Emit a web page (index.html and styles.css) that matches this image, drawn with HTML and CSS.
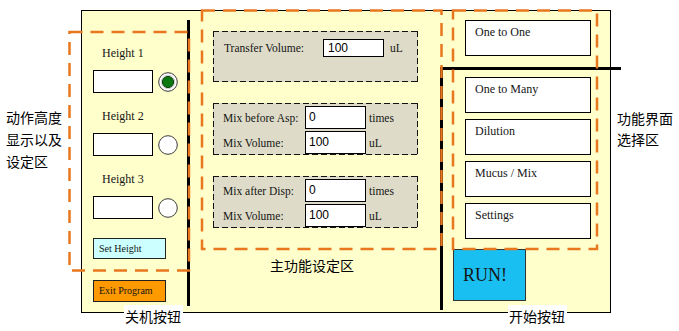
FILE: index.html
```html
<!DOCTYPE html>
<html>
<head>
<meta charset="utf-8">
<link rel="stylesheet" href="styles.css">
</head>
<body>
<div class="stage">
  <div class="panel">
    <div class="left-col">
      <div class="hgroup">
        <div class="hlabel">Height 1</div>
        <div class="hrow">
          <div class="hfield"></div>
          <svg class="radio" viewBox="0 0 20 20"><circle cx="10" cy="10" r="9.3" fill="#fff" stroke="#3a3a3a" stroke-width="1"/><circle cx="10" cy="10" r="6.8" fill="none" stroke="#cfcfcf" stroke-width="1"/><circle cx="10" cy="10" r="5.6" fill="#08780f" stroke="#0a3d0a" stroke-width="1"/></svg>
        </div>
      </div>
      <div class="hgroup">
        <div class="hlabel">Height 2</div>
        <div class="hrow">
          <div class="hfield"></div>
          <svg class="radio" viewBox="0 0 20 20"><circle cx="10" cy="10" r="9.3" fill="#fff" stroke="#3a3a3a" stroke-width="1"/></svg>
        </div>
      </div>
      <div class="hgroup">
        <div class="hlabel">Height 3</div>
        <div class="hrow">
          <div class="hfield"></div>
          <svg class="radio" viewBox="0 0 20 20"><circle cx="10" cy="10" r="9.3" fill="#fff" stroke="#3a3a3a" stroke-width="1"/></svg>
        </div>
      </div>
      <div class="btn btn-set">Set Height</div>
      <div class="btn btn-exit">Exit Program</div>
    </div>
    <div class="divider"></div>
    <div class="mid-col">
      <div class="gbox gbox-single">
        <div class="frow">
          <span class="flabel flabel-wide">Transfer Volume:</span>
          <div class="field field-short">100</div>
          <span class="unit unit-wide">uL</span>
        </div>
      </div>
      <div class="gbox">
        <div class="frow">
          <span class="flabel">Mix before Asp:</span>
          <div class="field">0</div>
          <span class="unit">times</span>
        </div>
        <div class="frow">
          <span class="flabel">Mix Volume:</span>
          <div class="field">100</div>
          <span class="unit">uL</span>
        </div>
      </div>
      <div class="gbox">
        <div class="frow">
          <span class="flabel">Mix after Disp:</span>
          <div class="field">0</div>
          <span class="unit">times</span>
        </div>
        <div class="frow">
          <span class="flabel">Mix Volume:</span>
          <div class="field">100</div>
          <span class="unit">uL</span>
        </div>
      </div>
    </div>
    <div class="right-col">
      <div class="mode mode-first">One to One</div>
      <div class="mode">One to Many</div>
      <div class="mode">Dilution</div>
      <div class="mode">Mucus / Mix</div>
      <div class="mode">Settings</div>
      <div class="run">RUN!</div>
    </div>
  </div>

  <svg class="annot" width="679" height="331" viewBox="0 0 679 331">
    <path d="M441.5 310 V68.5 H621" fill="none" stroke="#000" stroke-width="3"/>
    <g fill="none" stroke="#e8771e" stroke-width="2.5" stroke-dasharray="13 8">
      <rect x="69.5" y="32" width="119.5" height="238.5"/>
      <rect x="202" y="10.5" width="239.5" height="238.5"/>
      <rect x="453" y="10.5" width="144" height="238.5"/>
    </g>
  </svg>

  <div class="note note-left">动作高度<br>显示以及<br>设定区</div>
  <div class="note note-off">关机按钮</div>
  <div class="note note-main">主功能设定区</div>
  <div class="note note-run">开始按钮</div>
  <div class="note note-mode">功能界面<br>选择区</div>
</div>
</body>
</html>
```
FILE: styles.css
```css
body {
  margin: 0;
  background: #fff;
}

.stage {
  position: relative;
  width: 679px;
  height: 331px;
  box-sizing: border-box;
  padding: 10px 0 0 81px;
  overflow: hidden;
  font-family: "Liberation Serif", serif;
  color: #151515;
}

.panel {
  width: 530px;
  height: 303px;
  box-sizing: border-box;
  border: 1px solid #000;
  background: #ffffcc;
  display: flex;
}

/* left column */
.left-col {
  width: 105px;
  box-sizing: border-box;
  padding: 35px 0 0 11px;
  display: flex;
  flex-direction: column;
  align-items: flex-start;
}

.hgroup + .hgroup {
  margin-top: 16px;
}

.hlabel {
  font-size: 12px;
  line-height: 14px;
  margin: 0 0 10px 9px;
}

.hrow {
  display: flex;
  align-items: center;
  gap: 5px;
}

.hfield {
  width: 60px;
  height: 23px;
  box-sizing: border-box;
  border: 1px solid #000;
  background: #fff;
}

.radio {
  width: 20px;
  height: 20px;
  display: block;
}

.btn {
  width: 73px;
  height: 21px;
  box-sizing: border-box;
  border: 1px solid #222;
  font-size: 10px;
  line-height: 19px;
  padding-left: 5px;
  white-space: nowrap;
}

.btn-set {
  margin-top: 19px;
  background: #ccffff;
}

.btn-exit {
  margin-top: 21px;
  height: 22px;
  line-height: 20px;
  background: #ff9900;
}

.divider {
  width: 3px;
  background: #000;
  margin: 9px 0 6px;
}

/* middle column */
.mid-col {
  width: 251px;
  box-sizing: border-box;
  padding: 20px 0 0 23px;
}

.gbox {
  width: 205px;
  height: 52px;
  box-sizing: border-box;
  padding: 3px 0 0 10px;
  background:
    repeating-linear-gradient(90deg, #111 0 6px, transparent 6px 9px) left top / 100% 1px no-repeat,
    repeating-linear-gradient(90deg, #111 0 6px, transparent 6px 9px) left bottom / 100% 1px no-repeat,
    repeating-linear-gradient(180deg, #111 0 6px, transparent 6px 9px) left top / 1px 100% no-repeat,
    repeating-linear-gradient(180deg, #111 0 6px, transparent 6px 9px) right top / 1px 100% no-repeat,
    #dedcc8;
}

.gbox-single {
  height: 51px;
  padding: 8px 0 0 11px;
}

.gbox + .gbox {
  margin-top: 21px;
}

.frow {
  display: flex;
  align-items: center;
}

.frow + .frow {
  margin-top: 2px;
}

.flabel {
  width: 82px;
  font-size: 11.5px;
  white-space: nowrap;
}

.flabel-wide {
  width: 99px;
}

.field {
  width: 61px;
  height: 23px;
  box-sizing: border-box;
  border: 1px solid #000;
  background: #fff;
  font-family: "Liberation Sans", sans-serif;
  font-size: 12px;
  line-height: 21px;
  padding-left: 3px;
  color: #000;
}

.field-short {
  height: 18px;
  line-height: 16px;
  padding-left: 4px;
}

.unit {
  font-size: 11.5px;
  margin-left: 3px;
}

.unit-wide {
  margin-left: 6px;
}

/* right column */
.right-col {
  flex: 1;
  box-sizing: border-box;
  padding: 9px 0 0 12px;
  display: flex;
  flex-direction: column;
  align-items: flex-start;
}

.mode {
  width: 126px;
  height: 36px;
  box-sizing: border-box;
  margin-left: 12px;
  border: 1px solid #000;
  background: #fff;
  font-size: 12px;
  line-height: 14px;
  padding: 4px 0 0 9px;
}

.mode + .mode {
  margin-top: 6px;
}

.mode-first {
  margin-bottom: 15px;
}

.run {
  margin-top: 10px;
  width: 73px;
  height: 52px;
  box-sizing: border-box;
  border: 1px solid #333;
  background: #19bff0;
  font-size: 18px;
  display: flex;
  align-items: center;
  padding-left: 9px;
}

/* annotations */
.annot {
  position: absolute;
  left: 0;
  top: 0;
  pointer-events: none;
}

.note {
  position: absolute;
  font-family: "Noto Sans CJK SC", sans-serif;
  font-size: 14px;
  line-height: 22px;
  color: #000;
  white-space: nowrap;
}

.note-left {
  left: 6px;
  top: 106px;
}

.note-off {
  left: 124px;
  top: 305px;
  padding: 0 2px 0 1px;
  background: #fff;
}

.note-main {
  left: 270px;
  top: 254px;
}

.note-run {
  left: 508px;
  top: 305px;
  padding: 0 2px 0 1px;
  background: #fff;
}

.note-mode {
  left: 617px;
  top: 108px;
  line-height: 21px;
}
```
